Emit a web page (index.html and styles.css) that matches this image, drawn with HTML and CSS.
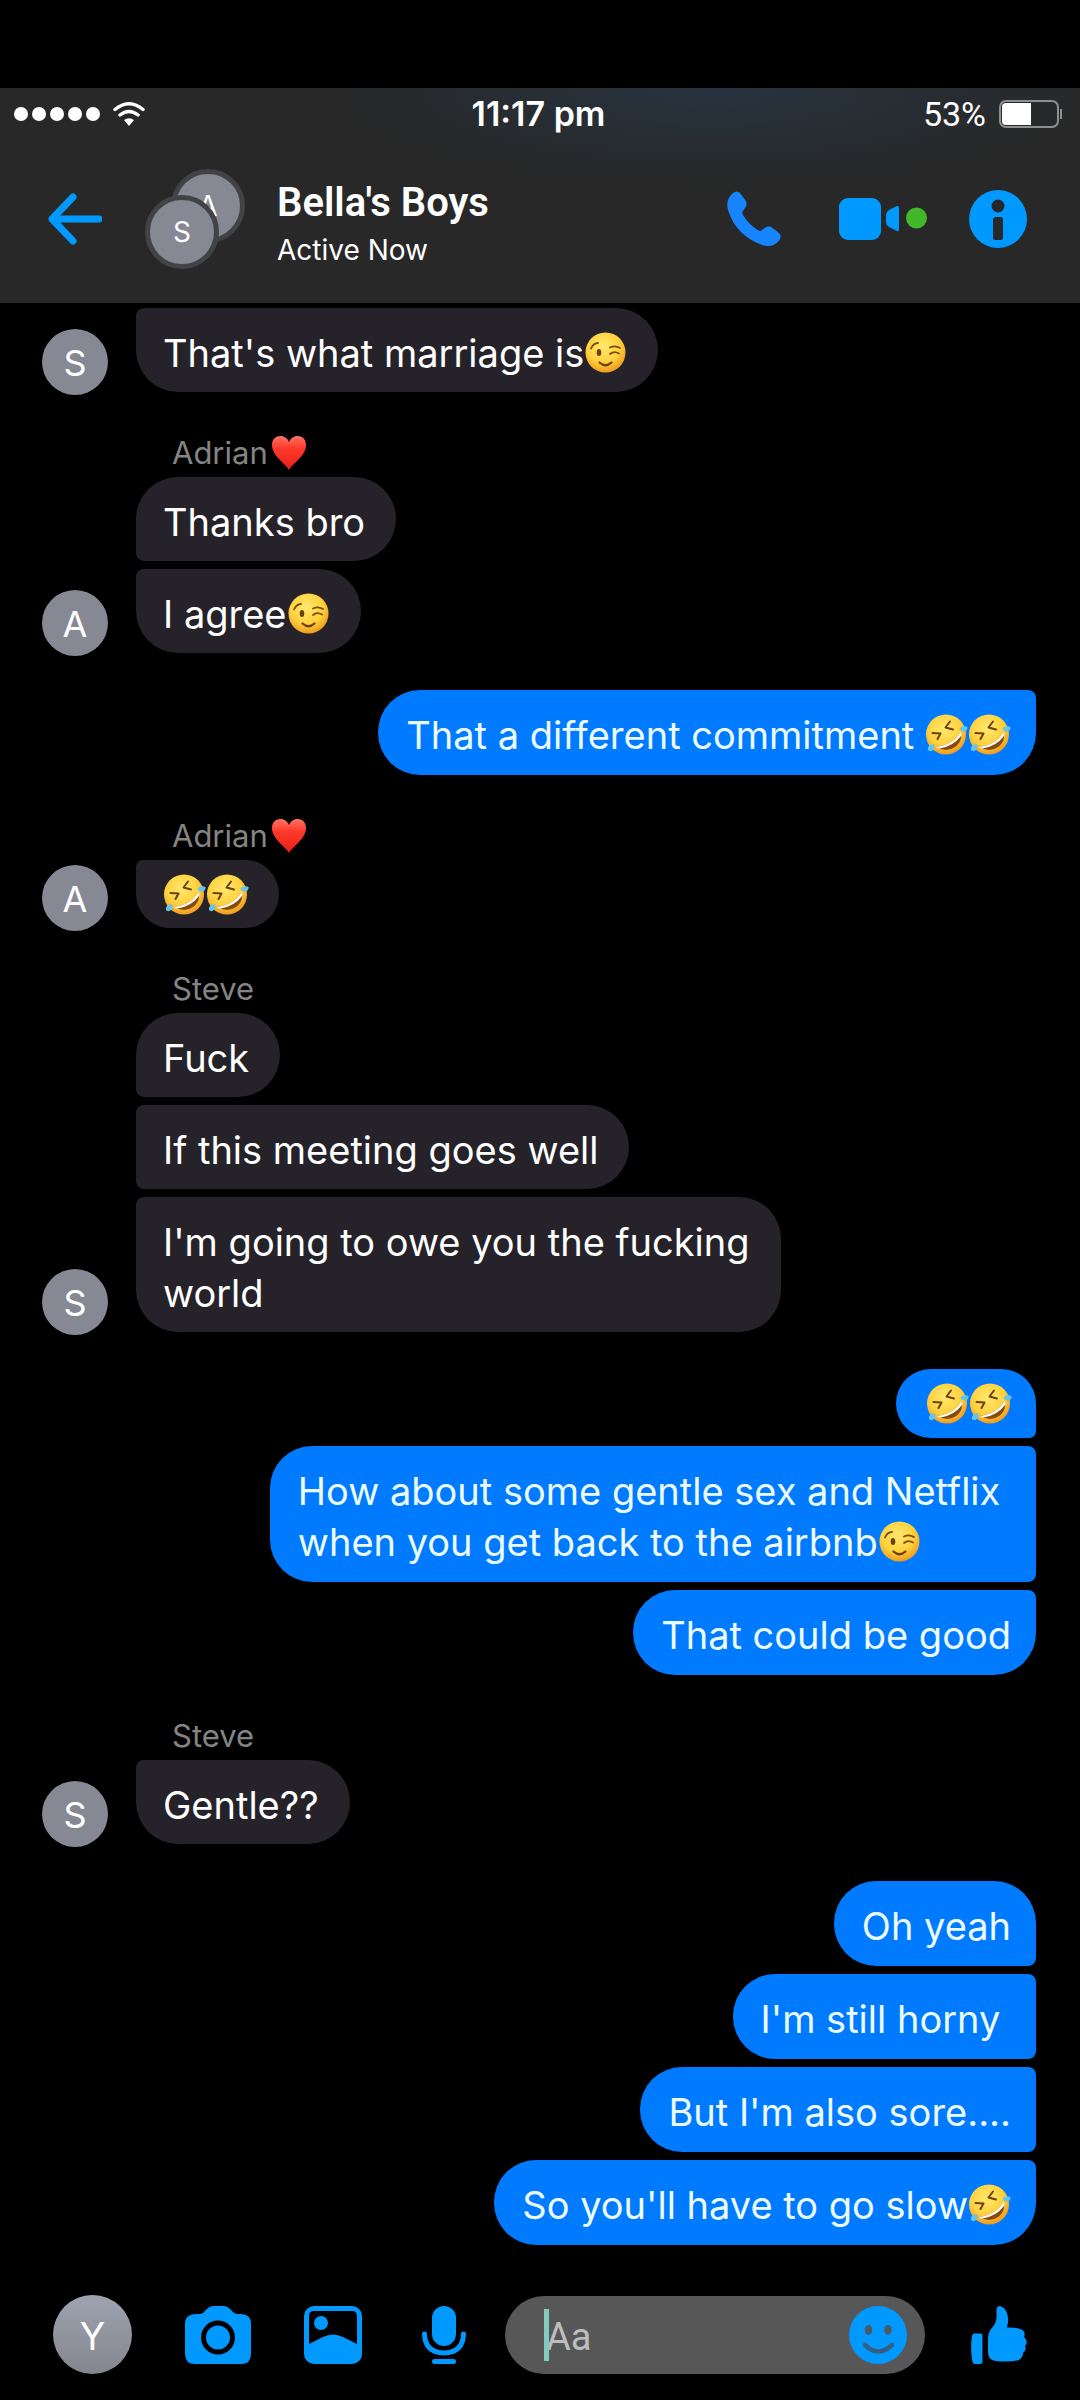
FILE: index.html
```html
<!DOCTYPE html>
<html lang="en">
<head>
<meta charset="utf-8">
<meta name="viewport" content="width=device-width, initial-scale=1">
<title>Bella's Boys</title>
<link rel="stylesheet" href="styles.css">
</head>
<body>
<svg class="sprite" aria-hidden="true">
  <defs>
    <radialGradient id="face" cx="0.45" cy="0.35" r="0.68">
      <stop offset="0" stop-color="#ffe86e"/><stop offset="0.6" stop-color="#ffd13d"/><stop offset="1" stop-color="#ee941c"/>
    </radialGradient>
    <linearGradient id="heartFill" x1="0" y1="0" x2="0" y2="1">
      <stop offset="0" stop-color="#ff7464"/><stop offset="0.35" stop-color="#ff3b2c"/><stop offset="1" stop-color="#e81d18"/>
    </linearGradient>
    <symbol id="wink" viewBox="0 0 43 41">
      <circle cx="21.5" cy="20.5" r="20" fill="url(#face)"/>
      <ellipse cx="15" cy="20.5" rx="2.3" ry="3.6" fill="#6d4209"/>
      <path d="M7 16.5Q9.500 11 14 11M26 15.500Q31 13 36 16M26 22Q30 18.500 35 21.500" fill="none" stroke="#7a4c0c" stroke-width="1.800" stroke-linecap="round"/>
      <path d="M15.500 30.500Q21.500 36 27.500 30.500" fill="none" stroke="#6d4209" stroke-width="2.200" stroke-linecap="round"/>
    </symbol>
    <symbol id="rofl" viewBox="0 0 43 41">
      <circle cx="21" cy="20.500" r="20" fill="url(#face)"/>
      <path d="M7.500 19L15.500 19.500L12.500 25M25 7.500L20.500 13.500L28 15.500" fill="none" stroke="#6d4209" stroke-width="2" stroke-linecap="round" stroke-linejoin="round"/>
      <path d="M11 33Q28 31 35.500 18Q38 26 31 32.500Q22 39 11 33Z" fill="#874b0b"/>
      <path d="M11 33Q28 31 35.500 18Q37 20 36 22Q28 32.500 14.500 34.500Q12 34.500 11 33Z" fill="#fff"/>
      <path d="M3 36Q2 31 9 30Q10.500 35 6.500 37Q4 37.500 3 36ZM34.500 14Q39 11 42.500 13Q43 17 38.500 17.500Q35 17 34.500 14Z" fill="#62c4ef"/>
    </symbol>
    <symbol id="heart" viewBox="0 0 36 36">
      <path d="M18 35C14 28 1 21 1 10C1 4 5 1 9.500 1C13.500 1 16.500 3.500 18 7C19.500 3.500 22.500 1 26.500 1C31 1 35 4 35 10C35 21 22 28 18 35Z" fill="url(#heartFill)"/>
    </symbol>
  </defs>
</svg>

<header class="top">
  <div class="status">
    <div class="signal">
      <span class="dots"><i></i><i></i><i></i><i></i><i></i></span>
      <svg width="32" height="24" viewBox="0 0 32 24" role="img" aria-label="Wi-Fi">
        <path d="M2 7.500Q16-4 30 7.500M7 13Q16 6 25 13" fill="none" stroke="#fff" stroke-width="3.400" stroke-linecap="round"/>
        <path d="M11 18Q16 14.500 21 18L16 24Z" fill="#fff"/>
      </svg>
    </div>
    <time class="clock">11:17 pm</time>
    <div class="power">
      <span>53%</span>
      <svg width="64" height="28" viewBox="0 0 64 28" role="img" aria-label="Battery">
        <rect x="1" y="1" width="58" height="26" rx="6" fill="none" stroke="#8e8f91" stroke-width="2"/>
        <path d="M7 3H32V25H7Q3 25 3 21V7Q3 3 7 3Z" fill="#fff"/>
        <path d="M62 9V19" stroke="#8e8f91" stroke-width="2"/>
      </svg>
    </div>
  </div>
  <div class="bar">
    <button class="icon" aria-label="Back">
      <svg width="54" height="52" viewBox="0 0 54 52"><path d="M51 26H5M25 4L4 26L25 48" fill="none" stroke="#0099ff" stroke-width="7" stroke-linecap="round" stroke-linejoin="round"/></svg>
    </button>
    <div class="pair">
      <span class="face back">A</span>
      <span class="face front">S</span>
    </div>
    <div class="who">
      <h1>Bella's Boys</h1>
      <p>Active Now</p>
    </div>
    <nav class="actions" aria-label="Call">
      <button class="icon" aria-label="Voice call">
        <svg width="54" height="56" viewBox="0 0 54 56"><path d="M5 3Q9-1.500 13 2L18.500 9.500Q21 13.500 18 17L15.500 20.500Q15 22 16 24Q22 34 31.500 39.500Q33.500 40.500 35 39L38.500 36.500Q42 34.500 45.500 37L52 42Q55 45 52.500 49Q46 57.500 35 54Q9 44.500 1 19Q-1.500 9 5 3Z" fill="#1785ff"/></svg>
      </button>
      <button class="icon" aria-label="Video call">
        <svg width="88" height="42" viewBox="0 0 88 42"><rect x="0" y="0" width="42" height="42" rx="9" fill="#0099ff"/><path d="M47 17Q47 14 50 12L58 8Q60 7.500 60 10V31Q60 34 58 33L50 29Q47 27 47 24Z" fill="#0099ff"/><circle cx="77.500" cy="20" r="10.500" fill="#42b72a"/></svg>
      </button>
      <button class="icon" aria-label="Info">
        <svg width="58" height="60" viewBox="0 0 58 60"><circle cx="29" cy="30" r="29" fill="#0099ff"/><circle cx="29" cy="17" r="6.500" fill="#272829"/><rect x="24" y="28" width="10" height="23" rx="2.500" fill="#272829"/></svg>
      </button>
    </nav>
  </div>
</header>

<main class="chat">
  <section class="group in">
    <span class="avatar">S</span>
    <div class="stack"><p class="bubble">That's what marriage is<svg class="emoji" role="img" aria-label="Winking face"><use href="#wink"/></svg></p></div>
  </section>

  <section class="group in">
    <span class="avatar">A</span>
    <div class="stack">
      <h2 class="name">Adrian<svg class="heart" role="img" aria-label="Red heart"><use href="#heart"/></svg></h2>
      <p class="bubble">Thanks bro</p>
      <p class="bubble">I agree<svg class="emoji" role="img" aria-label="Winking face"><use href="#wink"/></svg></p>
    </div>
  </section>

  <section class="group out">
    <p class="bubble">That a different commitment <svg class="emoji" role="img" aria-label="Rolling on the floor laughing"><use href="#rofl"/></svg><svg class="emoji" role="img" aria-label="Rolling on the floor laughing"><use href="#rofl"/></svg></p>
  </section>

  <section class="group in">
    <span class="avatar">A</span>
    <div class="stack">
      <h2 class="name">Adrian<svg class="heart" role="img" aria-label="Red heart"><use href="#heart"/></svg></h2>
      <p class="bubble only-emoji"><svg class="emoji" role="img" aria-label="Rolling on the floor laughing"><use href="#rofl"/></svg><svg class="emoji" role="img" aria-label="Rolling on the floor laughing"><use href="#rofl"/></svg></p>
    </div>
  </section>

  <section class="group in">
    <span class="avatar">S</span>
    <div class="stack">
      <h2 class="name">Steve</h2>
      <p class="bubble">Fuck</p>
      <p class="bubble">If this meeting goes well</p>
      <p class="bubble">I'm going to owe you the fucking<br>world</p>
    </div>
  </section>

  <section class="group out">
    <p class="bubble only-emoji"><svg class="emoji" role="img" aria-label="Rolling on the floor laughing"><use href="#rofl"/></svg><svg class="emoji" role="img" aria-label="Rolling on the floor laughing"><use href="#rofl"/></svg></p>
    <p class="bubble">How about some gentle sex and Netflix&nbsp;<br>when you get back to the airbnb<svg class="emoji" role="img" aria-label="Winking face"><use href="#wink"/></svg></p>
    <p class="bubble">That could be good</p>
  </section>

  <section class="group in">
    <span class="avatar">S</span>
    <div class="stack">
      <h2 class="name">Steve</h2>
      <p class="bubble">Gentle??</p>
    </div>
  </section>

  <section class="group out">
    <p class="bubble">Oh yeah</p>
    <p class="bubble">I'm still horny&nbsp;</p>
    <p class="bubble">But I'm also sore....</p>
    <p class="bubble">So you'll have to go slow<svg class="emoji" role="img" aria-label="Rolling on the floor laughing"><use href="#rofl"/></svg></p>
  </section>
</main>

<footer class="composer">
  <span class="me">Y</span>
  <div class="tools">
    <button class="icon" aria-label="Camera">
      <svg width="66" height="58" viewBox="0 0 66 58"><path d="M11 8H15Q18 8 20 5Q24 0 29 0H38Q43 0 47 5Q49 8 52 8H56Q66 8 66 18V48Q66 58 56 58H10Q0 58 0 48V18Q0 8 11 8Z" fill="#0099ff"/><circle cx="33" cy="31.500" r="14.500" fill="#0099ff" stroke="#000" stroke-width="5"/></svg>
    </button>
    <button class="icon" aria-label="Photos">
      <svg width="58" height="58" viewBox="0 0 58 58"><rect width="58" height="58" rx="10" fill="#0099ff"/><path d="M10 5H48Q53 5 53 10V38L39 31Q29 26 19 31L5 38V10Q5 5 10 5Z" fill="#000"/><circle cx="17" cy="17" r="7" fill="#0099ff"/></svg>
    </button>
    <button class="icon" aria-label="Voice message">
      <svg width="58" height="58" viewBox="-7 0 58 58"><rect x="10" width="24" height="40" rx="12" fill="#0099ff"/><path d="M2.500 28Q3 46.500 22 47Q41 46.500 41.500 28M12.500 55.500H31.500" fill="none" stroke="#0099ff" stroke-width="5" stroke-linecap="round"/></svg>
    </button>
  </div>
  <div class="field">
    <input type="text" placeholder="Aa" aria-label="Message">
    <span class="caret"></span>
    <button class="icon" aria-label="Emoji">
      <svg width="58" height="58" viewBox="0 0 58 58"><circle cx="29" cy="29" r="29" fill="#0099ff"/><ellipse cx="19.500" cy="24" rx="3.700" ry="5" fill="#4c5965"/><ellipse cx="39" cy="24" rx="3.700" ry="5" fill="#4c5965"/><path d="M16 39Q29 52 43 39" fill="none" stroke="#355d80" stroke-width="4.500" stroke-linecap="round"/></svg>
    </button>
  </div>
  <button class="icon" aria-label="Like">
    <svg width="56" height="58" viewBox="0 0 56 58"><path d="M3 27.500H10Q11.500 27.500 11.500 30V56Q11.500 58 9.500 58H4Q2 58 1.500 56Q-1 43 1 30Q1.500 27.500 3 27.500ZM17 32Q17 27 20 23Q25 18 25.500 12V3Q26 0 29 0Q36 2 37 12Q37.500 16 36 21.500Q46 21 51.500 24Q55 27 53 31Q58 35 54 40Q56 44 52 47Q52 51 48 54Q41 56 31 55.500Q22 55.500 19 52.500Q17 50 17 46Z" fill="#0099ff"/></svg>
  </button>
</footer>
</body>
</html>
```
FILE: styles.css
```css
* {
  box-sizing: border-box;
  margin: 0;
  padding: 0;
}

body {
  min-height: 100vh;
  display: flex;
  flex-direction: column;
  padding-top: 88px;
  background: #000;
  color: #fff;
  font-family: Inter, sans-serif;
}

.sprite {
  position: absolute;
  width: 0;
  height: 0;
}

svg {
  display: block;
}

.icon {
  flex: none;
  border: 0;
  background: none;
  cursor: pointer;
}

/* Header */
.top {
  background: radial-gradient(ellipse 36% 46% at 66% 0, #26333f, rgba(40, 40, 40, 0)), #282828;
}

.status {
  display: grid;
  grid-template-columns: 1fr auto 1fr;
  align-items: center;
  height: 51px;
  padding: 0 17px 0 14px;
  font: 34px/40px Roboto, sans-serif;
}

.signal,
.power,
.dots {
  display: flex;
  align-items: center;
}

.signal {
  gap: 13px;
}

.dots {
  gap: 4px;
}

.dots i {
  width: 14px;
  height: 14px;
  border-radius: 50%;
  background: #fff;
}

.clock {
  font: 600 34px/40px Inter, sans-serif;
}

.power {
  justify-content: flex-end;
  gap: 13px;
}

.bar {
  display: flex;
  align-items: center;
  height: 164px;
  padding: 0 53px 4px 48px;
}

.pair {
  display: grid;
  width: 100px;
  height: 100px;
  margin-left: 43px;
}

.face {
  grid-area: 1 / 1;
  display: flex;
  align-items: center;
  justify-content: center;
  width: 74px;
  height: 74px;
  border: 5px solid #424345;
  border-radius: 50%;
  background: #868993;
  font-size: 28px;
}

.back {
  justify-self: end;
}

.front {
  align-self: end;
}

.who {
  flex: 1;
  margin-left: 32px;
  padding-top: 12px;
}

.who h1 {
  font: 600 40px/50px Roboto, sans-serif;
}

.who p {
  font-size: 28px;
  line-height: 44px;
}

.actions {
  display: flex;
  align-items: center;
  gap: 42px;
}

.actions .icon:first-child {
  margin-right: 16px;
}

/* Conversation */
.chat {
  flex: 1;
  display: flex;
  flex-direction: column;
  gap: 37px;
  padding: 5px 44px 50px 42px;
}

.group {
  display: flex;
}

.in {
  align-items: flex-end;
  gap: 28px;
}

.avatar {
  flex: none;
  width: 66px;
  height: 66px;
  margin-bottom: -3px;
  border-radius: 50%;
  background: #868993;
  font-size: 36px;
  line-height: 68px;
  text-align: center;
}

.stack,
.out {
  display: flex;
  flex-direction: column;
  align-items: flex-start;
  gap: 8px;
}

.out {
  align-items: flex-end;
}

.name {
  display: flex;
  align-items: center;
  gap: 3px;
  height: 40px;
  padding: 8px 36px 0;
  color: #848484;
  font-size: 31px;
  font-weight: 400;
  line-height: 40px;
}

.heart {
  width: 36px;
  height: 36px;
}

.bubble {
  padding: 20px 31px 13px 27px;
  border-radius: 42px;
  background: #252329;
  font-size: 38px;
  line-height: 51px;
}

.in .bubble:not(:last-child) {
  border-bottom-left-radius: 8px;
}

.in .bubble + .bubble,
.in .bubble:last-child {
  border-top-left-radius: 8px;
}

.out .bubble {
  padding: 20px 25px 14px 28px;
  background: #007aff;
  color: #ecfbff;
}

.out .bubble:not(:last-child) {
  border-bottom-right-radius: 8px;
}

.out .bubble + .bubble,
.out .bubble:only-child {
  border-top-right-radius: 8px;
}

.emoji {
  display: inline-block;
  width: 43px;
  height: 41px;
  vertical-align: -6px;
}

.in .only-emoji {
  display: flex;
  padding: 14px 30px 13px 27px;
}

.out .only-emoji {
  display: flex;
  padding: 14px 24px 14px 30px;
}

/* Composer */
.composer {
  display: flex;
  align-items: center;
  padding: 0 53px 26px;
}

.me {
  flex: none;
  width: 79px;
  height: 79px;
  border-radius: 50%;
  background: linear-gradient(#9ea3b0, #84868e);
  font-size: 38px;
  line-height: 82px;
  text-align: center;
}

.tools {
  display: flex;
  gap: 53px;
  padding: 0 32px 0 53px;
}

.field {
  position: relative;
  flex: 1;
  min-width: 0;
  display: flex;
  align-items: center;
  height: 78px;
  margin-right: 46px;
  padding: 0 18px 0 41px;
  border-radius: 39px;
  background: #575758;
}

.field input {
  flex: 1;
  width: 0;
  min-width: 0;
  padding-top: 4px;
  border: 0;
  outline: 0;
  background: none;
  color: #fff;
  font: 38px/48px Roboto, sans-serif;
}

.field input::placeholder {
  color: #bdbdbd;
  opacity: 1;
}

.caret {
  position: absolute;
  left: 39px;
  top: 13px;
  width: 5px;
  height: 52px;
  background: #86c9bf;
}
```
